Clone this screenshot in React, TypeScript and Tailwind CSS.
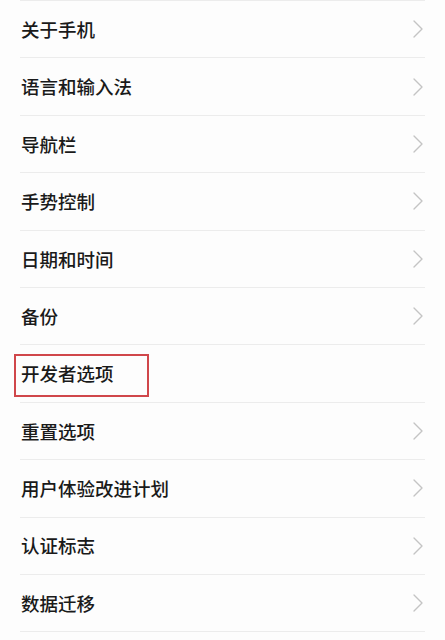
import { ChevronRight } from 'lucide-react';

const items = [
  '关于手机',
  '语言和输入法',
  '导航栏',
  '手势控制',
  '日期和时间',
  '备份',
  '开发者选项',
  '重置选项',
  '用户体验改进计划',
  '认证标志',
  '数据迁移',
];

export default function App() {
  return (
    <div
      className="w-[445px] h-[640px] overflow-hidden bg-[#fdfdfd] text-[#1a1a1a]"
      style={{ fontFamily: '"Noto Sans CJK SC", "Noto Sans", sans-serif' }}
    >
      {items.map((label, i) => {
        const highlighted = label === '开发者选项';
        return (
          <div key={label} className="relative h-[57.4px] border-t border-[#ececec] mx-[20px] flex items-center justify-between">
            <span className="text-[18.5px] leading-none pl-[1px] font-medium">{label}</span>
            {!highlighted && (
              <ChevronRight className="w-[32px] h-[32px] text-[#c4c4c4] mr-[-9px]" strokeWidth={1} />
            )}
            {highlighted && (
              <div className="absolute left-[-6px] top-[9px] w-[135px] h-[43px] border-2 border-[#d0474b]" />
            )}
          </div>
        );
      })}
      <div className="mx-[20px] border-t border-[#ececec]" />
    </div>
  );
}
